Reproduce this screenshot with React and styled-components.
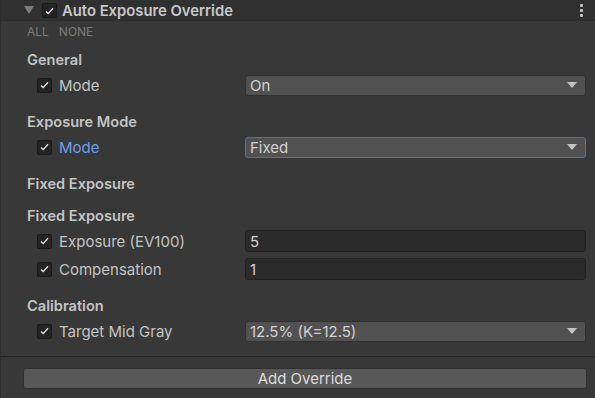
import React from "react";
import styled, { createGlobalStyle } from "styled-components";

const GlobalStyle = createGlobalStyle`
  html, body {
    margin: 0;
    padding: 0;
    background: #383838;
  }
  body {
    font-family: Inter, "Noto Sans", sans-serif;
    color: #c4c4c4;
  }
`;

const sections = [
  {
    title: "General",
    rows: [{ label: "Mode", kind: "dropdown", value: "On" }],
  },
  {
    title: "Exposure Mode",
    rows: [{ label: "Mode", kind: "dropdown", value: "Fixed", focused: true }],
  },
  { title: "Fixed Exposure", rows: [] },
  {
    title: "Fixed Exposure",
    rows: [
      { label: "Exposure (EV100)", kind: "field", value: "5" },
      { label: "Compensation", kind: "field", value: "1" },
    ],
  },
  {
    title: "Calibration",
    rows: [{ label: "Target Mid Gray", kind: "dropdown", value: "12.5% (K=12.5)" }],
  },
];

function Check() {
  return (
    <svg width="9" height="8" viewBox="0 0 9 8">
      <path d="M1 4.6 L3.2 6.6 L8 1.2" fill="none" stroke="#e8e8e8" strokeWidth="1.3" />
    </svg>
  );
}

function App() {
  return (
    <>
      <GlobalStyle />
      <StyledPanel>
        <StyledHeader>
          <StyledFoldout />
          <StyledCheckbox>
            <Check />
          </StyledCheckbox>
          <StyledTitle>Auto Exposure Override</StyledTitle>
          <StyledKebab>
            <span />
            <span />
            <span />
          </StyledKebab>
        </StyledHeader>
        <StyledToggleAll>
          <span>ALL</span>
          <span>NONE</span>
        </StyledToggleAll>
        <StyledContent>
          {sections.map((section, i) => (
            <StyledSection key={i}>
              <StyledSectionTitle>{section.title}</StyledSectionTitle>
              {section.rows.length > 0 && (
                <StyledRows>
                  {section.rows.map((row) => (
                    <StyledRow key={row.label}>
                      <StyledLabel $focused={row.focused}>
                        <StyledCheckbox>
                          <Check />
                        </StyledCheckbox>
                        {row.label}
                      </StyledLabel>
                      {row.kind === "dropdown" ? (
                        <StyledDropdown $focused={row.focused}>
                          <span>{row.value}</span>
                          <StyledArrow />
                        </StyledDropdown>
                      ) : (
                        <StyledField>{row.value}</StyledField>
                      )}
                    </StyledRow>
                  ))}
                </StyledRows>
              )}
            </StyledSection>
          ))}
        </StyledContent>
        <StyledFooter>
          <StyledButton>Add Override</StyledButton>
        </StyledFooter>
      </StyledPanel>
    </>
  );
}

const StyledPanel = styled.div`
  width: 595px;
  height: 398px;
  box-sizing: border-box;
  border-left: 1px solid #2c2c2c;
  background: #383838;
  overflow: hidden;
`;

const StyledHeader = styled.div`
  height: 21px;
  display: flex;
  align-items: center;
  padding: 1px 12px 0 23px;
  background: #303030;
  border-bottom: 1px solid #2d2d2d;
  box-sizing: border-box;
`;

const StyledFoldout = styled.div`
  width: 0;
  height: 0;
  border-left: 5px solid transparent;
  border-right: 5px solid transparent;
  border-top: 8px solid #7c7c7c;
  margin-right: 8px;
  margin-top: -1px;
`;

const StyledTitle = styled.div`
  font-weight: 600;
  font-size: 14.8px;
  color: #c8c8c8;
  margin-left: 5px;
  flex: 1;
`;

const StyledKebab = styled.div`
  display: flex;
  flex-direction: column;
  gap: 2px;
  margin-top: -1px;
  span {
    width: 3px;
    height: 3px;
    border-radius: 1px;
    background: #c4c4c4;
  }
`;

const StyledToggleAll = styled.div`
  height: 20px;
  display: flex;
  align-items: center;
  gap: 10px;
  padding-left: 26px;
  font-size: 12px;
  color: #7a7a7a;
`;

const StyledContent = styled.div`
  padding: 0 9px 7px 26px;
`;

const StyledSection = styled.div`
  padding-top: 6px;
`;

const StyledSectionTitle = styled.div`
  height: 26px;
  line-height: 26px;
  font-weight: 600;
  font-size: 14.6px;
  color: #c4c4c4;
`;

const StyledRows = styled.div`
  display: flex;
  flex-direction: column;
  gap: 6px;
  margin-top: 1px;
  padding-bottom: 7px;
`;

const StyledRow = styled.div`
  display: grid;
  grid-template-columns: 218px 1fr;
  height: 22px;
  align-items: center;
`;

const StyledLabel = styled.div`
  display: flex;
  align-items: center;
  gap: 7px;
  padding-left: 10px;
  font-size: 15px;
  color: ${(p) => (p.$focused ? "#6f9ee6" : "#c4c4c4")};
`;

const StyledCheckbox = styled.div`
  width: 13px;
  height: 13px;
  border: 1px solid #191919;
  border-radius: 2px;
  background: #242424;
  display: flex;
  align-items: center;
  justify-content: center;
  flex-shrink: 0;
`;

const StyledDropdown = styled.div`
  height: 21px;
  box-sizing: border-box;
  display: flex;
  align-items: center;
  justify-content: space-between;
  padding: 0 8px 0 4px;
  background: #515151;
  border: 1px solid ${(p) => (p.$focused ? "#3a79bb" : "#303030")};
  border-radius: 3px;
  font-size: 15px;
  color: #d2d2d2;
`;

const StyledArrow = styled.div`
  width: 0;
  height: 0;
  border-left: 5px solid transparent;
  border-right: 5px solid transparent;
  border-top: 6px solid #c4c4c4;
`;

const StyledField = styled.div`
  height: 22px;
  box-sizing: border-box;
  display: flex;
  align-items: center;
  padding: 0 4px;
  background: #2a2a2a;
  border: 1px solid #212121;
  border-radius: 3px;
  font-size: 15px;
  color: #d2d2d2;
`;

const StyledFooter = styled.div`
  border-top: 1px solid #242424;
  padding: 11px 8px 0 22px;
`;

const StyledButton = styled.div`
  height: 21px;
  box-sizing: border-box;
  display: flex;
  align-items: center;
  justify-content: center;
  background: #585858;
  border: 1px solid #303030;
  border-radius: 3px;
  font-size: 15px;
  color: #dcdcdc;
`;

export default App;
